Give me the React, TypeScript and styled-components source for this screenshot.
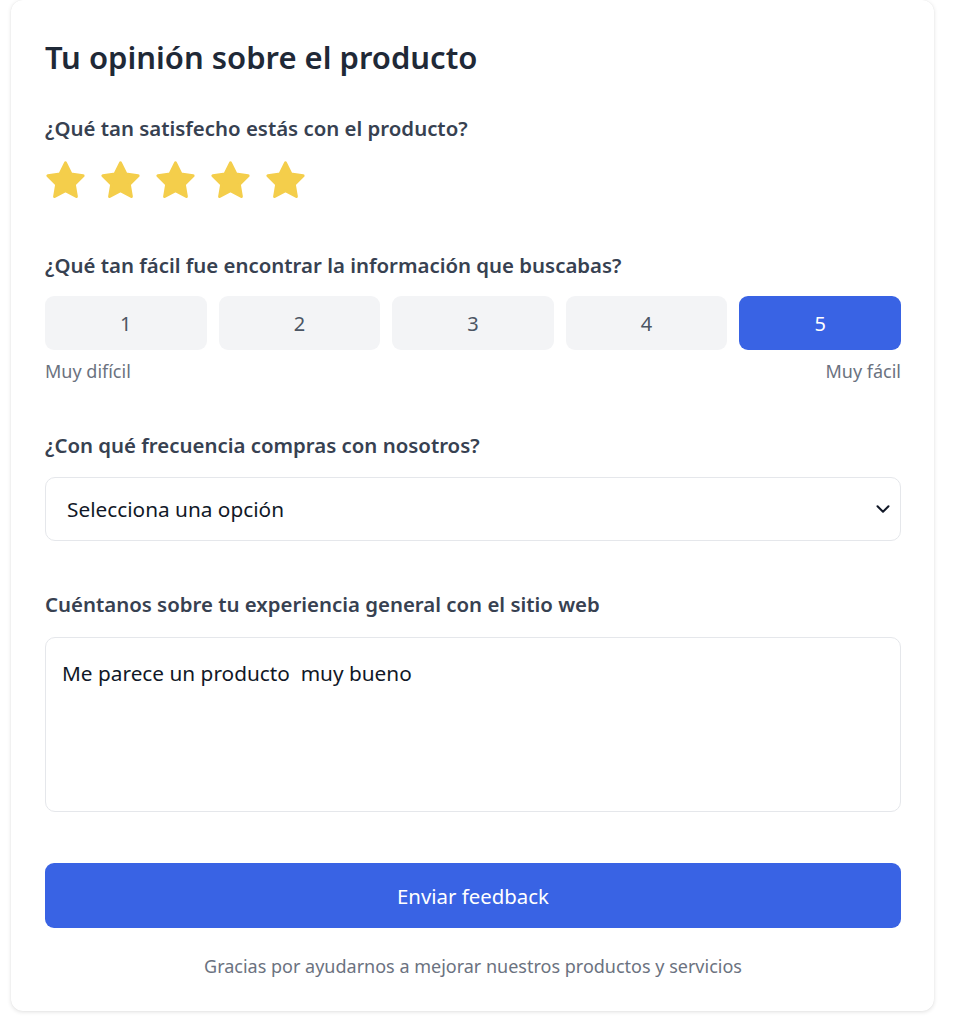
import { useState } from "react"
import styled, { createGlobalStyle } from "styled-components"
import { ChevronDown } from "lucide-react"

const GlobalStyle = createGlobalStyle`
  * { box-sizing: border-box; }
  body {
    margin: 0;
    background: #ffffff;
    font-family: "Noto Sans", "Open Sans", sans-serif;
  }
`

const Style = {
  Page: styled.div`
    width: 953px;
    height: 1024px;
    overflow: hidden;
    padding: 0 19px 0 11px;
  `,
  Card: styled.div`
    background: #ffffff;
    border-radius: 12px;
    box-shadow: 0 1px 4px rgba(0, 0, 0, 0.12), 0 0 1px rgba(0, 0, 0, 0.08);
    padding: 37px 33px 32px 34px;
    display: flex;
    flex-direction: column;
  `,
  Title: styled.h1`
    margin: 0 0 37px;
    font-size: 31px;
    line-height: 40px;
    font-weight: 600;
    color: #1f2937;
  `,
  Section: styled.div<{ $gap: number }>`
    display: flex;
    flex-direction: column;
    margin-bottom: ${(p) => p.$gap}px;
  `,
  Label: styled.label<{ $space?: number }>`
    font-size: 20.4px;
    line-height: 28px;
    font-weight: 600;
    color: #374151;
    margin-bottom: ${(p) => p.$space ?? 17}px;
  `,
  Stars: styled.div`
    display: flex;
    gap: 10px;
    margin-top: -1px;
    margin-left: -2px;
  `,
  StarButton: styled.button<{ $on: boolean }>`
    border: 0;
    padding: 0;
    background: none;
    cursor: pointer;
    display: flex;
    color: ${(p) => (p.$on ? "#f4ce4b" : "#d1d5db")};
  `,
  Scale: styled.div`
    display: grid;
    grid-template-columns: repeat(5, 1fr);
    gap: 12px;
  `,
  ScaleButton: styled.button<{ $active: boolean }>`
    height: 54px;
    border: 0;
    border-radius: 9px;
    font-family: inherit;
    font-size: 20px;
    cursor: pointer;
    background: ${(p) => (p.$active ? "#3963e4" : "#f3f4f6")};
    color: ${(p) => (p.$active ? "#ffffff" : "#4b5563")};
  `,
  ScaleHints: styled.div`
    display: flex;
    justify-content: space-between;
    margin-top: 8px;
    font-size: 18px;
    line-height: 26px;
    color: #6b7280;
  `,
  SelectBox: styled.div`
    height: 64px;
    border: 1px solid #e5e7eb;
    border-radius: 10px;
    display: flex;
    align-items: center;
    justify-content: space-between;
    padding: 0 6px 0 21px;
    font-size: 20.8px;
    color: #111827;
  `,
  TextArea: styled.textarea`
    height: 175px;
    border: 1px solid #e5e7eb;
    border-radius: 10px;
    padding: 20px 16px;
    font-family: inherit;
    font-size: 20.8px;
    line-height: 30px;
    color: #111827;
    resize: none;
    outline: none;
  `,
  Submit: styled.button`
    height: 65px;
    border: 0;
    border-radius: 9px;
    background: #3963e4;
    color: #ffffff;
    font-family: inherit;
    font-size: 20.4px;
    cursor: pointer;
  `,
  Footer: styled.p`
    margin: 25px 0 0;
    text-align: center;
    font-size: 18px;
    line-height: 26px;
    color: #6b7280;
  `,
}

function StarIcon() {
  return (
    <svg width="45" height="45" viewBox="0 0 24 24" fill="currentColor" stroke="currentColor" strokeWidth="1.6" strokeLinejoin="round">
      <path d="M12 2.6l2.9 5.9 6.5.95-4.7 4.6 1.1 6.45L12 17.45 6.2 20.5l1.1-6.45-4.7-4.6 6.5-.95z" />
    </svg>
  )
}

export default function App() {
  const [rating, setRating] = useState(5)
  const [ease, setEase] = useState(5)
  const [comment, setComment] = useState("Me parece un producto  muy bueno")

  return (
    <>
      <GlobalStyle />
      <Style.Page>
        <Style.Card>
          <Style.Title>Tu opinión sobre el producto</Style.Title>

          <Style.Section $gap={48}>
            <Style.Label>¿Qué tan satisfecho estás con el producto?</Style.Label>
            <Style.Stars>
              {[1, 2, 3, 4, 5].map((n) => (
                <Style.StarButton key={n} $on={n <= rating} onClick={() => setRating(n)}>
                  <StarIcon />
                </Style.StarButton>
              ))}
            </Style.Stars>
          </Style.Section>

          <Style.Section $gap={47}>
            <Style.Label>¿Qué tan fácil fue encontrar la información que buscabas?</Style.Label>
            <Style.Scale>
              {[1, 2, 3, 4, 5].map((n) => (
                <Style.ScaleButton key={n} $active={n === ease} onClick={() => setEase(n)}>
                  {n}
                </Style.ScaleButton>
              ))}
            </Style.Scale>
            <Style.ScaleHints>
              <span>Muy difícil</span>
              <span>Muy fácil</span>
            </Style.ScaleHints>
          </Style.Section>

          <Style.Section $gap={49}>
            <Style.Label $space={18}>¿Con qué frecuencia compras con nosotros?</Style.Label>
            <Style.SelectBox>
              <span>Selecciona una opción</span>
              <ChevronDown size={22} strokeWidth={2.2} color="#111827" />
            </Style.SelectBox>
          </Style.Section>

          <Style.Section $gap={51}>
            <Style.Label $space={19}>Cuéntanos sobre tu experiencia general con el sitio web</Style.Label>
            <Style.TextArea value={comment} onChange={(e) => setComment(e.target.value)} />
          </Style.Section>

          <Style.Submit>Enviar feedback</Style.Submit>
          <Style.Footer>Gracias por ayudarnos a mejorar nuestros productos y servicios</Style.Footer>
        </Style.Card>
      </Style.Page>
    </>
  )
}
